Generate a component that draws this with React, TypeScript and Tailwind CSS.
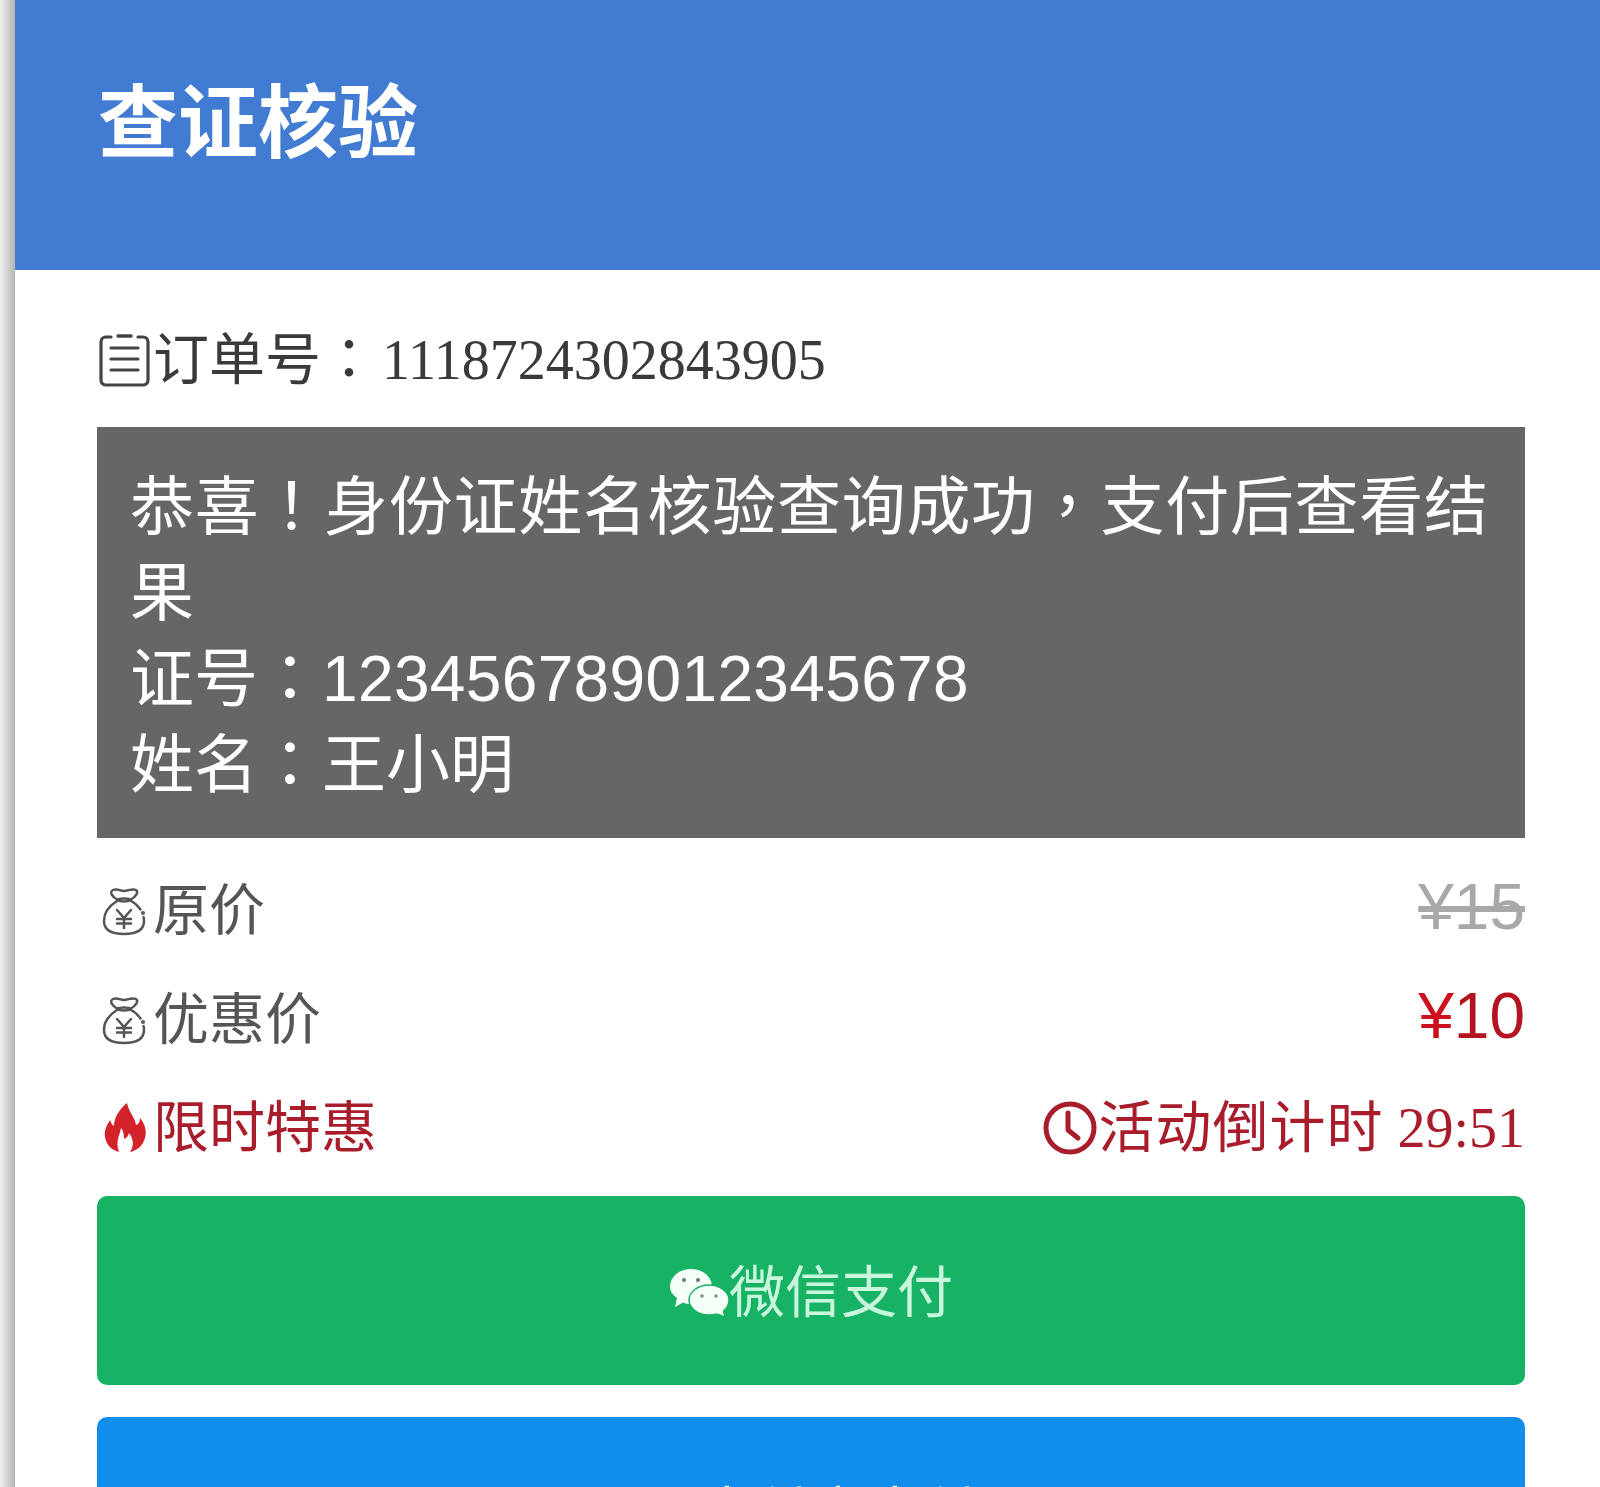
function ClipboardIcon() {
  return (
    <svg viewBox="0 0 56 56" className="w-[56px] h-[56px] shrink-0" fill="none" stroke="#444" strokeWidth="3.2" strokeLinecap="round">
      <path d="M14 5 H9 a5 5 0 0 0 -5 5 V48 a5 5 0 0 0 5 5 H46 a5 5 0 0 0 5 -5 V10 a5 5 0 0 0 -5 -5 H41" />
      <path d="M21 4 H34" strokeWidth="3.5" />
      <path d="M14 16 H41 M14 27 H41 M14 38 H41" />
    </svg>
  );
}

function BagIcon() {
  return (
    <svg viewBox="0 0 56 56" className="w-[56px] h-[56px] shrink-0" fill="none" stroke="#555" strokeWidth="2.5" strokeLinecap="round" strokeLinejoin="round">
      <path d="M21 17 C15 14 12 9 16 7 C20 5 23 8 27 8 C31 8 35 5 39 7 C42 9 39 14 33 17" />
      <path d="M20 17 C23 19 31 19 34 17 M20 17 C22 15 32 15 34 17" />
      <path d="M20 18 C12 23 7 30 7 38 C7 47 14 51 27 51 C40 51 47 47 47 38 C47 36.500 47 35 46.500 34" />
      <path d="M34 18 C38 20 41 23 43.500 26.500" />
      <path d="M20 27 L27 35 L34 27 M27 35 V45 M20 36 H34 M20 40.500 H34" />
      <circle cx="46" cy="30" r="0.8" fill="#555" />
    </svg>
  );
}

function FlameIcon() {
  return (
    <svg viewBox="0 0 56 56" className="w-[56px] h-[56px] shrink-0">
      <path
        fill="#d3222a"
        fillRule="evenodd"
        d="M30 3 C32 13 38 17 39 25 C42 24 43 21 43 18 C48 24 50 31 48 38 C46 46 39 51 33 52 C37 46 37 40 32 33 C31 37 29 38 27 39 C27 34 26 30 24 28 C23 35 18 41 22 52 C14 50 9 44 8 37 C7 30 10 25 13 20 C14 23 15 25 17 26 C17 17 23 9 30 3 Z"
      />
    </svg>
  );
}

function ClockIcon() {
  return (
    <svg viewBox="0 0 56 56" className="w-[56px] h-[56px] shrink-0" fill="none" stroke="#a81c2b" strokeLinecap="round" strokeLinejoin="round">
      <circle cx="28" cy="28" r="24" strokeWidth="5" />
      <path d="M26 13 V30 L36 38" strokeWidth="5" />
    </svg>
  );
}

function WechatIcon() {
  return (
    <svg viewBox="0 0 60 56" className="w-[60px] h-[56px] shrink-0">
      <path fill="#f4fff8" d="M22 4 C34 4 43 12 43 22 C43 32 34 39 22 39 C19 39 16.500 38.500 14 37.500 L6 42 L8 33 C3 29 1 26 1 22 C1 12 10 4 22 4 Z" />
      <path fill="#f4fff8" stroke="#17b264" strokeWidth="1.500" d="M40 20 C51 20 60 27 60 35 C60 39 58 43 54.500 46 L56 52 L48 49 C46 49.500 43 50 40 50 C29 50 20 43 20 35 C20 27 29 20 40 20 Z" />
      <circle cx="15" cy="15" r="2" fill="#6a7a70" />
      <circle cx="29" cy="15" r="2" fill="#6a7a70" />
      <circle cx="33" cy="31" r="1.800" fill="#8a8a80" />
      <circle cx="47" cy="31" r="1.800" fill="#8a8a80" />
    </svg>
  );
}

function AlipayIcon() {
  return (
    <svg viewBox="0 0 56 56" className="w-[56px] h-[56px] shrink-0">
      <circle cx="28" cy="28" r="26" fill="#d9f3ff" />
    </svg>
  );
}

export default function App() {
  return (
    <div className="h-[1487px] overflow-hidden flex bg-white font-['Liberation_Sans','Noto_Sans_CJK_SC',sans-serif]">
      {/* page edge of the photographed phone screen */}
      <div className="w-[15px] shrink-0 bg-gradient-to-r from-[#f0f0f0] to-[#b4b4b4]" />

      <div className="flex-1 min-w-0">
        <header className="h-[270px] bg-[#427bd2] pl-[83px] pt-[76px]">
          <h1 className="text-[80px] leading-[96px] font-bold text-white">查证核验</h1>
        </header>

        <main className="pl-[82px] pr-[75px]">
          <div className="h-[157px] pt-[22px] flex items-center text-[56px] text-[#3a3a3a] font-['Liberation_Serif','Noto_Sans_CJK_SC',serif]">
            <ClipboardIcon />
            <span>
              订单号<span className="leading-none font-['Noto_Sans_CJK_TC']">：</span>
              <span className="ml-[5px]">1118724302843905</span>
            </span>
          </div>

          <div className="bg-[#666666] text-white text-[64px] leading-[86px] px-[33px] pt-[37px] h-[411px]">
            <p className="tracking-[0.7px]">
              恭喜<span className="leading-none font-['Noto_Sans_CJK_TC']">！</span>身份证姓名核验查询成功<span className="leading-none font-['Noto_Sans_CJK_TC']">，</span>支付后查看结果
            </p>
            <p>
              证号<span className="leading-none font-['Noto_Sans_CJK_TC']">：</span>
              <span className="tracking-[0.35px]">123456789012345678</span>
            </p>
            <p>姓名<span className="leading-none font-['Noto_Sans_CJK_TC']">：</span>王小明</p>
          </div>

          <div className="mt-[17px] h-[108px] pt-[4px] flex items-center justify-between text-[56px] text-[#555555]">
            <div className="flex items-center">
              <BagIcon />
              <span>原价</span>
            </div>
            <span className="mb-[8px] text-[64px] text-[#a8a8a8] line-through">¥15</span>
          </div>

          <div className="h-[108px] pt-[5px] flex items-center justify-between text-[56px] text-[#555555]">
            <div className="flex items-center">
              <BagIcon />
              <span>优惠价</span>
            </div>
            <span className="mb-[8px] text-[64px] text-[#b3141f]">
              <span className="text-[#cc101c]">¥</span>10
            </span>
          </div>

          <div className="h-[109px] pt-[5px] flex items-center justify-between text-[56px] text-[#a81c2b]">
            <div className="flex items-center">
              <FlameIcon />
              <span>限时特惠</span>
            </div>
            <div className="flex items-center font-['Liberation_Serif','Noto_Sans_CJK_SC',serif]">
              <ClockIcon />
              <span>
                <span className="tracking-[1px]">活动倒计时</span> 29:51
              </span>
            </div>
          </div>

          <button className="mt-[16px] w-full h-[189px] pt-[4px] rounded-[10px] bg-[#17b264] text-[56px] text-[#c9f7de] flex items-center justify-center">
            <WechatIcon />
            <span>微信支付</span>
          </button>

          <button className="mt-[32px] w-full h-[189px] pt-[5px] rounded-[10px] bg-[#118deb] text-[56px] text-[#d9f3ff] flex items-center justify-center">
            <AlipayIcon />
            <span>支付宝支付</span>
          </button>
        </main>
      </div>
    </div>
  );
}
